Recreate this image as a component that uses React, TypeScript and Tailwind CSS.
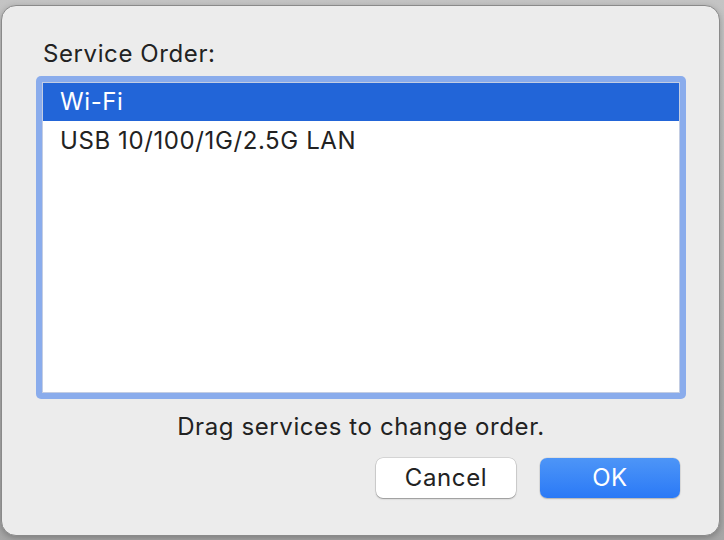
export default function App() {
  return (
    <div className="w-[724px] h-[540px] flex bg-gradient-to-b from-[#c4c4c4] to-[#a6a6a6] pt-[5px] pl-[1px] pr-[4px] pb-[4px] font-['Inter','Noto_Sans',sans-serif] tracking-[0.6px]">
      {/* Sheet dialog */}
      <div className="flex-1 flex flex-col rounded-[15px] border border-[#8a8a8a] bg-[#ececec] pl-[34px] pr-[33px] pt-[34px] shadow-[0_2px_6px_rgba(0,0,0,0.25)]">
        <div className="pl-[7px] text-[24px] leading-[28px] text-[#222]">Service Order:</div>

        {/* List with focus ring */}
        <div className="mt-[8px] h-[323px] rounded-[5px] bg-[#8aacec] p-[6px]">
          <div className="h-full border border-[#c3cde3] bg-white">
            <div className="h-[38px] flex items-center bg-[#2265d8] pl-[17px] text-[24px] text-white">
              Wi-Fi
            </div>
            <div className="h-[40px] flex items-center pl-[17px] text-[24px] text-[#222]">
              USB 10/100/1G/2.5G LAN
            </div>
          </div>
        </div>

        <div className="mt-[14px] text-center text-[24px] leading-[28px] text-[#222]">
          Drag services to change order.
        </div>

        <div className="mt-[17px] flex justify-end gap-[24px] pr-[6px]">
          <button className="w-[140px] h-[40px] rounded-[7px] bg-white text-[24px] text-[#222] shadow-[0_0_0_0.5px_rgba(0,0,0,0.18),0_1px_1.5px_rgba(0,0,0,0.3)]">
            Cancel
          </button>
          <button className="w-[140px] h-[40px] rounded-[7px] bg-gradient-to-b from-[#4d95f7] to-[#2a79f6] text-[24px] text-white shadow-[0_0_0_0.5px_rgba(0,0,0,0.1),0_1px_1.5px_rgba(0,0,0,0.2)]">
            OK
          </button>
        </div>
      </div>
    </div>
  );
}
